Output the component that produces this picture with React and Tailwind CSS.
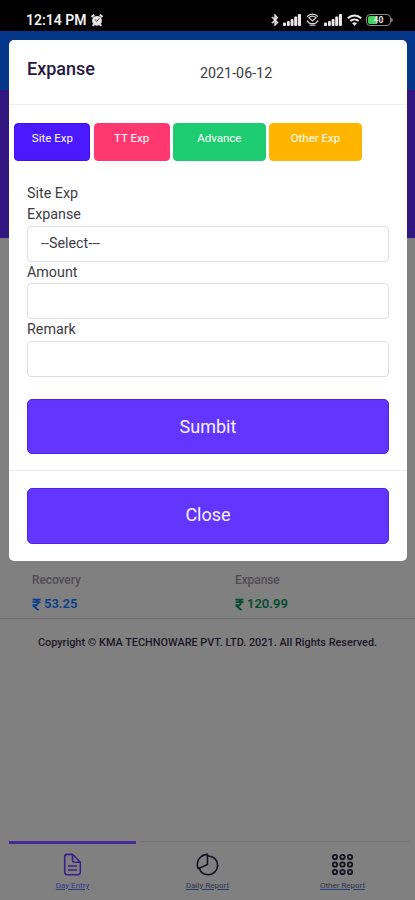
import { FaBluetoothB, FaRupeeSign } from 'react-icons/fa';
import { IoDocumentTextOutline, IoPieChartOutline } from 'react-icons/io5';

const tabs = [
  { label: 'Site Exp', style: 'w-[76px] bg-[#4a19ff] border-[#3f10f2]' },
  { label: 'TT Exp', style: 'w-[76px] bg-[#ff396f] border-[#ff396f]' },
  { label: 'Advance', style: 'w-[93px] bg-[#1dcc70] border-[#1dcc70]' },
  { label: 'Other Exp', style: 'w-[93px] bg-[#ffb400] border-[#ffb400]' },
];

const navItems = [
  { label: 'Day Entry', icon: IoDocumentTextOutline, color: 'text-[#35208c]', text: 'text-[#40308c]', active: true },
  { label: 'Daily Report', icon: IoPieChartOutline, color: 'text-[#14101f]', text: 'text-[#353344]', active: false },
  { label: 'Other Report', icon: AppsIcon, color: 'text-[#14101f]', text: 'text-[#353344]', active: false },
];

function AppsIcon({ className }) {
  return (
    <svg className={className} viewBox="0 0 25 25" fill="none" stroke="currentColor" strokeWidth="1.8">
      {[5, 12.5, 20].map((y) => [5, 12.5, 20].map((x) => (
        <circle key={`${x}-${y}`} cx={x} cy={y} r="2.2" />
      )))}
    </svg>
  );
}

function AlarmIcon() {
  return (
    <svg className="w-[12px] h-[13px] text-[#e4e4e4]" viewBox="0 0 12 13" fill="none" stroke="currentColor">
      <path d="M.5 3 3.200.9M11.500 3 8.800.9M3 10.400l-1.200 1.600M9 10.400l1.200 1.600" strokeWidth="2" />
      <circle cx="6" cy="6.800" r="4.900" fill="currentColor" stroke="none" />
      <path d="M4 5.600 5.800 7.300l2.400-2.800" stroke="#333" strokeWidth="1" />
    </svg>
  );
}

function SignalIcon() {
  return (
    <svg className="w-[18px] h-[12px]" viewBox="0 0 18 12" fill="#e8e8e8">
      <rect x="0" y="8.5" width="3" height="3.5" rx="1" />
      <rect x="4" y="7" width="2.8" height="5" rx="1" />
      <rect x="7.6" y="5" width="2.9" height="7" rx="1" />
      <rect x="11.2" y="2.5" width="3" height="9.5" rx="1" />
      <rect x="14.9" y="0" width="3.1" height="12" rx="1" />
    </svg>
  );
}

function HotspotIcon() {
  return (
    <svg className="w-[13px] h-[13px]" viewBox="0 0 13 13" fill="none" stroke="#d8d8d8" strokeWidth="1.4">
      <path d="M1 3.600C4 .3 9 .3 12 3.600" />
      <path d="M2.800 4.600c2.200-1.700 5.200-1.700 7.400 0L6.500 8z" strokeWidth="1.2" />
      <path d="M1 7.500c1.200 2.300 3.200 3.300 5.500 3.300s4.300-1 5.500-3.300" strokeWidth="1.500" />
      <path d="M3.500 12.200h6" strokeWidth="1" />
    </svg>
  );
}

function WifiIcon() {
  return (
    <svg className="w-[15px] h-[12px]" viewBox="0 0 15 12" fill="none" stroke="#ececec" strokeWidth="2">
      <path d="M.8 4.200c3.900-3.700 9.500-3.700 13.400 0" />
      <path d="M3.300 7.100c2.400-2.200 6-2.200 8.400 0" />
      <path d="M5 9.100c1.500-1.200 3.500-1.200 5 0L7.500 12z" fill="#ececec" stroke="none" />
    </svg>
  );
}

function Battery() {
  return (
    <div className="flex items-center">
      <div className="relative w-[25px] h-[12px] rounded-[4px] border border-[#8c8c8c] p-px">
        <div className="w-[9px] h-full rounded-l-[2px] bg-[#45d35b]" />
        <span className="absolute inset-0 text-center text-[8.5px] leading-[10px] font-bold text-[#e6e6e6]">40</span>
      </div>
      <div className="w-[2px] h-[4px] rounded-r bg-[#777]" />
    </div>
  );
}

function StatusBar() {
  return (
    <div className="h-[31px] bg-black flex items-start justify-between pl-[26px] pr-[22px] pt-[13px] text-[#f0f0f0]">
      <div className="flex items-center h-[14px]">
        <span className="w-[65px] whitespace-nowrap text-[14px] leading-[14px] font-semibold">12:14 PM</span>
        <AlarmIcon />
      </div>
      <div className="flex items-center h-[13px]">
        <FaBluetoothB className="w-[10px] h-[12px] mr-[3px] stroke-current stroke-[24px]" />
        <SignalIcon />
        <div className="w-[23px] flex justify-center"><HotspotIcon /></div>
        <SignalIcon />
        <div className="w-[24px] flex justify-center"><WifiIcon /></div>
        <Battery />
      </div>
    </div>
  );
}

function Balance({ label, amount, color }) {
  return (
    <div className="w-[203px] shrink-0">
      <p className="text-[12px] leading-[18px] tracking-[-0.1px] font-medium text-[#504c54]">{label}</p>
      <p className={`mt-[6px] flex items-center text-[13px] leading-[18px] font-semibold ${color}`}>
        <FaRupeeSign className="w-[9px] h-[13px] mr-[3px]" />
        {amount}
      </p>
    </div>
  );
}

function Field({ label, placeholder }) {
  return (
    <label className="block">
      <span className="block h-[21.7px] text-[14.3px] leading-[21.7px]">{label}</span>
      <div className="h-[36px] rounded-[4px] border border-[#dfdfe2] px-[13px] leading-[33px] text-[14.3px]">
        {placeholder}
      </div>
    </label>
  );
}

function ExpenseModal() {
  return (
    <div className="absolute top-[40px] left-[9px] right-[8px] h-[521px] rounded-[5px] bg-white text-[#3c3c41]">
      <div className="h-[65px] flex border-b border-[#ededf0] pl-[18px]">
        <h1 className="w-[173px] pt-[18px] text-[18px] leading-[22px] font-medium text-[#27173e]">Expanse</h1>
        <span className="pt-[22px] text-[14.3px] leading-[22px]">2021-06-12</span>
      </div>

      <div className="flex gap-[3.2px] pt-[18px] pl-[5.400px]">
        {tabs.map(({ label, style }) => (
          <button key={label} className={`h-[38px] rounded-[4px] border pb-[6px] text-[11.5px] text-white ${style}`}>
            {label}
          </button>
        ))}
      </div>

      <div className="px-[18px] pt-[21px]">
        <p className="h-[22px] text-[14.3px] leading-[22px]">Site Exp</p>
        <Field label="Expanse" placeholder="--Select---" />
        <Field label="Amount" />
        <Field label="Remark" />
        <button className="mt-[21.9px] h-[55px] w-full rounded-[5px] border border-[#4e22df] bg-[#6236ff] text-[18px] text-[#f6f1ff]">
          Sumbit
        </button>
      </div>

      <div className="mt-[16px] border-t border-[#e9e9ec] px-[18px] pt-[17px]">
        <button className="h-[56px] w-full rounded-[5px] border border-[#4e22df] bg-[#6236ff] pb-[2px] text-[18px] text-[#f6f1ff]">
          Close
        </button>
      </div>
    </div>
  );
}

export default function App() {
  return (
    <div className="relative w-full h-[900px] overflow-hidden flex flex-col bg-[#808080] font-[Roboto,sans-serif]">
      <StatusBar />
      <div className="h-[59px] bg-[#04368a]" />
      <div className="h-[148px] bg-[#311580]" />

      <div className="flex-1 flex flex-col pt-[333px]">
        <div className="h-[48px] flex border-b border-[#6d6c70] pl-[32px]">
          <Balance label="Recovery" amount="53.25" color="text-[#073e8c]" />
          <Balance label="Expanse" amount="120.99" color="text-[#064b31]" />
        </div>
        <p className="pt-[15px] text-center text-[10.9px] leading-[18px] font-medium whitespace-nowrap text-[#1d1726]">
          Copyright © KMA TECHNOWARE PVT. LTD. 2021. All Rights Reserved.
        </p>
      </div>

      <nav className="h-[59px] flex px-[5px]">
        {navItems.map(({ label, icon: Icon, color, text, active }) => (
          <a key={label} className={`flex-1 flex flex-col items-center ${color}`}>
            <span className={active ? 'w-[127px] h-[3px] bg-[#432a95]' : 'w-full h-[3px] border-t border-[#77767c]'} />
            <Icon className="mt-[8px] w-[25px] h-[25px]" />
            <span className={`mt-[3px] text-[8px] leading-[12px] underline underline-offset-1 decoration-[#1d4480] ${text}`}>{label}</span>
          </a>
        ))}
      </nav>

      <ExpenseModal />
    </div>
  );
}
